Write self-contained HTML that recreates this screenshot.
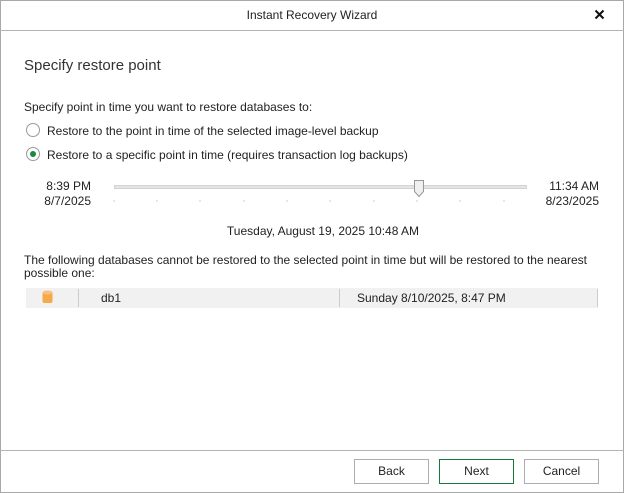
<!DOCTYPE html>
<html><head><style>
*{margin:0;padding:0;box-sizing:border-box}
body{width:624px;height:493px;background:#fff;font-family:"Liberation Sans",sans-serif;font-size:12px;color:#222;position:relative;overflow:hidden}
.frame{position:absolute;left:0;top:0;width:624px;height:493px;border:1px solid #a8a8a8}
.t{position:absolute;white-space:nowrap}
.hr{position:absolute;left:0;width:624px;height:1px;background:#b4b4b4}
.btn{position:absolute;top:459px;width:75px;height:25px;border:1px solid #adadad;text-align:center;line-height:23px;font-size:12px;background:#fff}
.radio{position:absolute;width:14px;height:14px;border:1px solid #999;border-radius:50%;background:#fff}
</style></head><body>
<div class="frame"></div>
<div class="t" style="left:0;width:624px;text-align:center;top:8px;font-size:12px">Instant Recovery Wizard</div>
<svg style="position:absolute;left:594px;top:9px" width="11" height="11"><path d="M1.5 1.5L9.5 9.5M9.5 1.5L1.5 9.5" stroke="#111" stroke-width="2"/></svg>
<div class="hr" style="top:30px"></div>
<div class="t" style="left:24px;top:57px;font-size:15px;color:#333">Specify restore point</div>
<div class="t" style="left:24px;top:100px">Specify point in time you want to restore databases to:</div>
<div class="radio" style="left:26px;top:123px"></div>
<div class="t" style="left:47px;top:124px">Restore to the point in time of the selected image-level backup</div>
<div class="radio" style="left:26px;top:147px"><div style="position:absolute;left:3px;top:3px;width:6px;height:6px;border-radius:50%;background:#1a8a3a"></div></div>
<div class="t" style="left:47px;top:148px">Restore to a specific point in time (requires transaction log backups)</div>
<div class="t" style="left:20px;width:71px;text-align:right;top:179px;line-height:15px">8:39 PM<br>8/7/2025</div>
<div class="t" style="left:530px;width:69px;text-align:right;top:179px;line-height:15px">11:34 AM<br>8/23/2025</div>
<div style="position:absolute;left:114px;top:185px;width:413px;height:4px;background:#e4e4e4;border:1px solid #d4d4d4"></div>
<svg style="position:absolute;left:112px;top:179px" width="420" height="24">
<g stroke="#ccc"><line x1="2" y1="21" x2="2" y2="23"/><line x1="45" y1="21" x2="45" y2="23"/><line x1="88" y1="21" x2="88" y2="23"/><line x1="132" y1="21" x2="132" y2="23"/><line x1="175" y1="21" x2="175" y2="23"/><line x1="218" y1="21" x2="218" y2="23"/><line x1="262" y1="21" x2="262" y2="23"/><line x1="305" y1="21" x2="305" y2="23"/><line x1="348" y1="21" x2="348" y2="23"/><line x1="392" y1="21" x2="392" y2="23"/></g>
<path d="M302.5 1.5H311.5V12.5L307 17.5L302.5 12.5Z" fill="#f0f0f0" stroke="#999"/>
</svg>
<div class="t" style="left:0;width:624px;text-align:center;padding-left:22px;top:224px">Tuesday, August 19, 2025 10:48 AM</div>
<div class="t" style="left:24px;top:254px;line-height:13px">The following databases cannot be restored to the selected point in time but will be restored to the nearest<br>possible one:</div>
<div style="position:absolute;left:26px;top:288px;width:572px;height:20px;background:#f0f1f0"></div>
<div style="position:absolute;left:78px;top:289px;width:1px;height:18px;background:#ccc"></div>
<div style="position:absolute;left:339px;top:289px;width:1px;height:18px;background:#ccc"></div>
<div style="position:absolute;left:597px;top:289px;width:1px;height:18px;background:#ccc"></div>
<svg style="position:absolute;left:42px;top:290px" width="12" height="15"><rect x="0.5" y="2" width="10" height="11" rx="2" fill="#f5a94a"/><ellipse cx="5.5" cy="2.5" rx="5" ry="2" fill="#f8c07a"/></svg>
<div class="t" style="left:101px;top:291px">db1</div>
<div class="t" style="left:357px;top:291px">Sunday 8/10/2025, 8:47 PM</div>
<div class="hr" style="top:450px"></div>
<div class="btn" style="left:354px">Back</div>
<div class="btn" style="left:439px;border-color:#1a7a3a">Next</div>
<div class="btn" style="left:524px">Cancel</div>
</body></html>
